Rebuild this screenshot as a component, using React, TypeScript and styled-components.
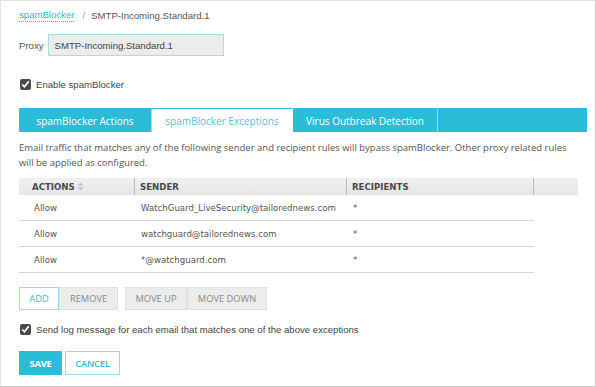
import styled, { createGlobalStyle } from 'styled-components';

const GlobalStyle = createGlobalStyle`
  html, body {
    margin: 0;
    padding: 0;
    background: #ffffff;
  }
  * {
    box-sizing: border-box;
  }
`;

const CYAN = '#2bbcd8';

const rows = [
  { action: 'Allow', sender: 'WatchGuard_LiveSecurity@tailorednews.com', recipient: '*' },
  { action: 'Allow', sender: 'watchguard@tailorednews.com', recipient: '*' },
  { action: 'Allow', sender: '*@watchguard.com', recipient: '*' },
];

export default function App() {
  return (
    <>
      <GlobalStyle />
      <Frame>
        <Breadcrumb>
          <CrumbLink>spamBlocker</CrumbLink>
          <CrumbSep>/</CrumbSep>
          <span>SMTP-Incoming.Standard.1</span>
        </Breadcrumb>

        <ProxyRow>
          <Label>Proxy</Label>
          <ProxyInput>SMTP-Incoming.Standard.1</ProxyInput>
        </ProxyRow>

        <CheckRow $top={21}>
          <Check type="checkbox" defaultChecked />
          <CheckText>Enable spamBlocker</CheckText>
        </CheckRow>

        <TabBar>
          <Tab $width={133}>spamBlocker Actions</Tab>
          <Tab $width={141} $active>
            spamBlocker Exceptions
          </Tab>
          <Tab $width={145}>Virus Outbreak Detection</Tab>
          <TabFill />
        </TabBar>

        <Description>
          Email traffic that matches any of the following sender and recipient rules will bypass spamBlocker. Other proxy related rules
          will be applied as configured.
        </Description>

        <Table>
          <HeaderRow>
            <HeadCell $width={116}>
              ACTIONS
              <SortIcon viewBox="0 0 7 9">
                <path d="M3.5 0.5 L6.5 3.8 L0.5 3.8 Z" fill="#c4c4c4" />
                <path d="M3.5 8.5 L6.5 5.2 L0.5 5.2 Z" fill="#c4c4c4" />
              </SortIcon>
            </HeadCell>
            <HeadCell $width={212}>SENDER</HeadCell>
            <HeadCell $width={187}>RECIPIENTS</HeadCell>
            <HeadCell $width={44} />
          </HeaderRow>
          {rows.map((r, i) => (
            <BodyRow key={i}>
              <BodyCell $width={116}>{r.action}</BodyCell>
              <BodyCell $width={212}>{r.sender}</BodyCell>
              <BodyCell $width={187}>{r.recipient}</BodyCell>
            </BodyRow>
          ))}
        </Table>

        <ButtonRow>
          <Group>
            <ToolButton $width={40} $primary>
              ADD
            </ToolButton>
            <ToolButton $width={59}>REMOVE</ToolButton>
          </Group>
          <Group>
            <ToolButton $width={62}>MOVE UP</ToolButton>
            <ToolButton $width={80}>MOVE DOWN</ToolButton>
          </Group>
        </ButtonRow>

        <CheckRow $top={12}>
          <Check type="checkbox" defaultChecked />
          <CheckText>Send log message for each email that matches one of the above exceptions</CheckText>
        </CheckRow>

        <Actions>
          <SaveButton>SAVE</SaveButton>
          <CancelButton>CANCEL</CancelButton>
        </Actions>
      </Frame>
    </>
  );
}

const Frame = styled.div`
  width: 596px;
  height: 387px;
  border: 1px solid #e4e4e4;
  border-right-color: #c8c8c8;
  border-bottom-color: #c8c8c8;
  padding: 7px 0 0 18px;
  overflow: hidden;
  font-family: 'Liberation Sans', Arial, sans-serif;
  color: #444;
`;

const Breadcrumb = styled.div`
  display: flex;
  align-items: center;
  height: 14px;
  font-size: 9.6px;
  color: #555;
`;

const CrumbLink = styled.span`
  color: ${CYAN};
  border-bottom: 1px dotted ${CYAN};
  line-height: 13px;
`;

const CrumbSep = styled.span`
  margin: 0 6px 0 8px;
  color: #999;
`;

const ProxyRow = styled.div`
  display: flex;
  align-items: center;
  margin-top: 12px;
  gap: 4px;
`;

const Label = styled.span`
  font-size: 9.6px;
  color: #555;
`;

const ProxyInput = styled.div`
  width: 176px;
  height: 22px;
  display: flex;
  align-items: center;
  padding-left: 6px;
  background: #ececec;
  border: 1px solid #a8dce7;
  font-size: 9.6px;
  color: #444;
`;

const CheckRow = styled.div<{ $top: number }>`
  display: flex;
  align-items: center;
  margin-top: ${({ $top }) => $top}px;
  height: 14px;
  gap: 4px;
`;

const Check = styled.input`
  width: 11px;
  height: 11px;
  margin: 0 1px 0 1px;
  accent-color: #4a4a4a;
`;

const CheckText = styled.span`
  font-size: 9.6px;
  color: #444;
`;

const TabBar = styled.div`
  display: flex;
  margin-top: 17px;
  width: 568px;
  height: 24px;
  background: ${CYAN};
`;

const Tab = styled.div<{ $width: number; $active?: boolean }>`
  width: ${({ $width }) => $width}px;
  display: flex;
  align-items: center;
  justify-content: center;
  font-family: 'Open Sans', sans-serif;
  font-size: 10px;
  color: ${({ $active }) => ($active ? '#56bfd6' : '#ffffff')};
  background: ${({ $active }) => ($active ? '#ffffff' : 'transparent')};
  border-top: 1px solid ${CYAN};
  height: ${({ $active }) => ($active ? 25 : 24)}px;
  border-right: 1px solid ${({ $active }) => ($active ? '#ffffff' : 'rgba(255,255,255,0.5)')};
`;

const TabFill = styled.div`
  flex: 1;
`;

const Description = styled.p`
  margin: 8px 0 0 0;
  width: 560px;
  font-family: 'Open Sans', sans-serif;
  font-size: 9.5px;
  line-height: 15px;
  color: #555;
`;

const Table = styled.div`
  margin-top: 8px;
  width: 559px;
`;

const HeaderRow = styled.div`
  display: flex;
  height: 17px;
  background: linear-gradient(#f0f0f0, #e6e6e6);
`;

const HeadCell = styled.div<{ $width: number }>`
  width: ${({ $width }) => $width}px;
  display: flex;
  align-items: center;
  gap: 2px;
  padding-left: 5px;
  border-right: 1px solid #bdbdbd;
  font-family: 'DejaVu Sans', Verdana, sans-serif;
  font-weight: bold;
  font-size: 8.6px;
  color: #4a4a4a;

  &:first-child {
    padding-left: 13px;
  }
  &:last-child {
    border-right: none;
  }
`;

const SortIcon = styled.svg`
  width: 7px;
  height: 9px;
`;

const BodyRow = styled.div`
  display: flex;
  width: 515px;
  height: 26px;
  border-bottom: 1px solid #d6d6d6;
`;

const BodyCell = styled.div<{ $width: number }>`
  width: ${({ $width }) => $width}px;
  display: flex;
  align-items: center;
  padding-left: 6px;
  font-family: 'DejaVu Sans', Verdana, sans-serif;
  font-size: 8.6px;
  color: #555;

  &:first-child {
    padding-left: 15px;
  }
`;

const ButtonRow = styled.div`
  display: flex;
  gap: 7px;
  margin-top: 14px;
`;

const Group = styled.div`
  display: flex;
`;

const ToolButton = styled.button<{ $width: number; $primary?: boolean }>`
  width: ${({ $width }) => $width}px;
  height: 23px;
  padding: 0;
  border: 1px solid ${({ $primary }) => ($primary ? '#9fd9e6' : '#e0e0e0')};
  background: ${({ $primary }) => ($primary ? '#ffffff' : '#ececec')};
  color: ${({ $primary }) => ($primary ? CYAN : '#8a8a8a')};
  font-family: 'Open Sans', sans-serif;
  font-size: 9.3px;
  cursor: pointer;
`;

const Actions = styled.div`
  display: flex;
  gap: 3px;
  margin-top: 15px;
`;

const SaveButton = styled.button`
  width: 43px;
  height: 24px;
  padding: 0;
  border: 1px solid ${CYAN};
  background: ${CYAN};
  color: #ffffff;
  font-family: 'Open Sans', sans-serif;
  font-weight: bold;
  font-size: 9.4px;
  letter-spacing: -0.3px;
`;

const CancelButton = styled.button`
  width: 55px;
  height: 24px;
  padding: 0;
  border: 1px solid #9fd9e6;
  background: #ffffff;
  color: ${CYAN};
  font-family: 'Open Sans', sans-serif;
  font-weight: 600;
  font-size: 9.4px;
  letter-spacing: -0.2px;
`;
